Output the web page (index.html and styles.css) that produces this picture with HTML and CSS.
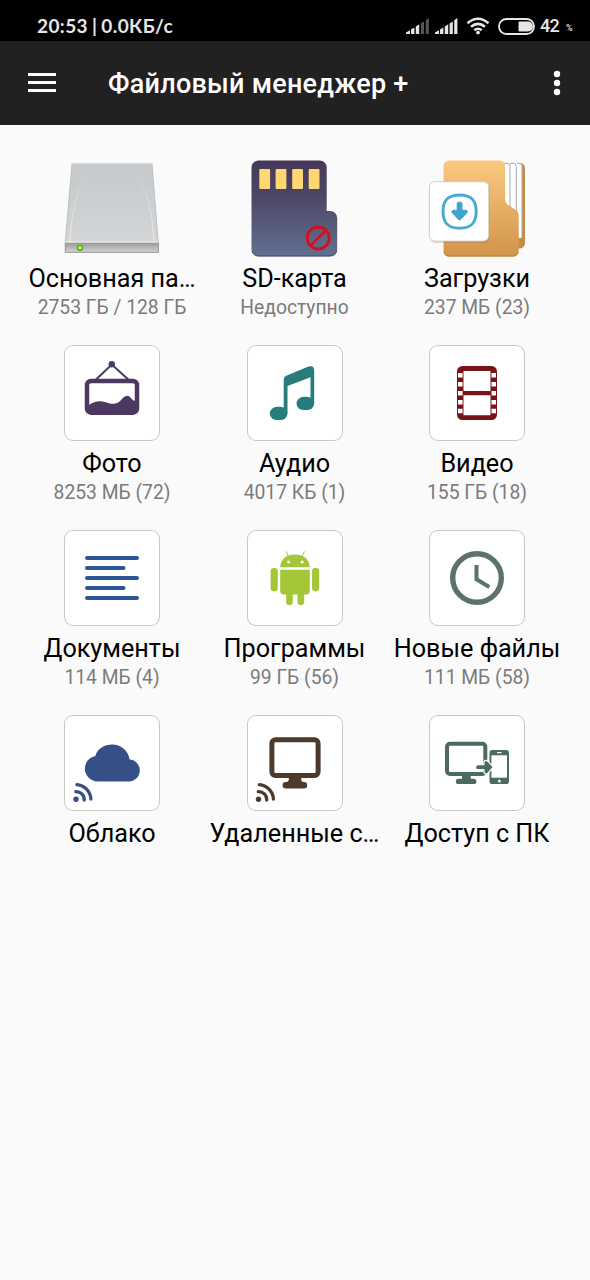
FILE: index.html
```html
<!DOCTYPE html>
<html lang="ru">
<head>
<meta charset="utf-8">
<title>Файловый менеджер +</title>
<link rel="stylesheet" href="styles.css">
</head>
<body>
<svg class="defs" aria-hidden="true">
  <defs>
    <linearGradient id="metal" x1="0" y1="0" x2="0" y2="1"><stop offset="0" stop-color="#c6c9cb"/><stop offset="1" stop-color="#d3d5d7"/></linearGradient>
    <linearGradient id="edge" x1="0" y1="0" x2="0" y2="1"><stop offset="0" stop-color="#999"/><stop offset="1" stop-color="#d4d4d4"/></linearGradient>
    <linearGradient id="shine" x1="0" y1="0" x2="0" y2="1"><stop offset="0" stop-color="#dcdedf" stop-opacity="0"/><stop offset=".5" stop-color="#dcdedf"/><stop offset="1" stop-color="#e6e7e8"/></linearGradient>
    <linearGradient id="card" x1="0" y1="0" x2="0" y2="1"><stop offset="0" stop-color="#47385a"/><stop offset=".35" stop-color="#4c4564"/><stop offset="1" stop-color="#627092"/></linearGradient>
    <linearGradient id="folder" x1="0" y1="0" x2="0" y2="1"><stop offset="0" stop-color="#fbc981"/><stop offset="1" stop-color="#d1944a"/></linearGradient>
    <symbol id="signal" viewBox="0 0 23 16">
      <path d="M0 14.500 4 12.200V16H0zM5 11.500 8.400 9.400V16H5zM9.800 8.500 13.200 6.300V16H9.800z"/>
    </symbol>
    <symbol id="cast" viewBox="0 0 24 24">
      <circle cx="4" cy="20" r="2.7" fill="currentColor"/>
      <path d="M3.8 12.3A8 8 0 0 1 12.2 20.7M4.8 5.4A15.2 15.2 0 0 1 18.9 19.7" fill="none" stroke="currentColor" stroke-width="3.3" stroke-linecap="round"/>
    </symbol>
  </defs>
</svg>

<header class="status">
  <div class="status-left"><span class="clock">20:53</span><span class="bar">|</span><span class="speed">0.0КБ/с</span></div>
  <div class="status-right">
    <svg class="signal" viewBox="0 0 23 16"><use href="#signal"/><path class="weak" d="M15 5.200 18 3.400V16h-3zM19.800 2 22.800 0V16H19.800z"/></svg>
    <svg class="signal signal-two" viewBox="0 0 23 16"><use href="#signal"/><path d="M14.600 5.400 17.800 3.400V16h-3.200zM19.200 2.200 22.400 0V16h-3.200z"/></svg>
    <svg class="wifi" viewBox="0 0 24 18"><path d="M1.500 6.200Q12-2.800 22.500 6.200M5 9.800Q12 4 19 9.800M8.300 13.200Q12 10.200 15.700 13.200" fill="none" stroke="#e6e6e6" stroke-width="2.500"/><circle cx="12" cy="15.600" r="1.900"/></svg>
    <svg class="battery" viewBox="0 0 37 17"><rect x="1" y="1" width="35" height="15" rx="7.500" fill="none" stroke="#e6e6e6" stroke-width="1.800"/><path d="M21.500 3.500h8.500a5 5 0 0 1 0 10H21.500a1 1 0 0 1-1-1V4.500a1 1 0 0 1 1-1z"/></svg>
    <span class="level">42</span><span class="percent">%</span>
  </div>
</header>

<nav class="toolbar">
  <svg class="menu" viewBox="0 0 28 19"><path d="M0 0h28v3H0zM0 8h28v3H0zM0 16h28v3H0z"/></svg>
  <h1 class="title">Файловый менеджер +</h1>
  <svg class="more" viewBox="0 0 8 26"><circle cx="4" cy="4" r="3.200"/><circle cx="4" cy="13" r="3.200"/><circle cx="4" cy="22" r="3.200"/></svg>
</nav>

<main class="grid">
  <section class="item">
    <svg class="icon" viewBox="0 0 96 96">
      <path d="M8 3.500H88L94.300 83H1.200z" fill="url(#metal)" stroke="#b5b7b9" stroke-width=".8"/>
      <path d="M8 3.500H88" stroke="#dcdddd" stroke-width="1.500"/>
      <path d="M22 16Q8 40 6 82M74 16Q88 40 90 82" fill="none" stroke="url(#shine)" stroke-width="1.200"/>
      <rect x="1.200" y="82.700" width="93.200" height="9.600" fill="url(#edge)" stroke="#888" stroke-width=".8"/>
      <path d="M1.200 82.200H94.400" stroke="#ececec" stroke-width="1.200"/>
      <circle cx="16" cy="87.800" r="3.400" fill="#62b51a"/><circle cx="16" cy="87.800" r="1.500" fill="#d8fa8c"/>
    </svg>
    <h2 class="label">Основная па…</h2><p class="info">2753 ГБ / 128 ГБ</p>
  </section>
  <section class="item">
    <svg class="icon" viewBox="0 0 96 96">
      <path d="M11.500 .5H72.700a7 7 0 0 1 7 7V51h3.500a7 7 0 0 1 7 7V89.300a7 7 0 0 1-7 7h-71.700a7 7 0 0 1-7-7V7.500a7 7 0 0 1 7-7z" fill="url(#card)"/>
      <path d="M5 91a7 7 0 0 0 6.500 5h71.700a7 7 0 0 0 6.500-5" fill="none" stroke="#444967" stroke-width="1"/>
      <g fill="#ffd873"><rect x="12.300" y="9" width="10.800" height="20" rx="1"/><rect x="28.600" y="9" width="10.800" height="20" rx="1"/><rect x="45.200" y="9" width="10.800" height="20" rx="1"/><rect x="61.700" y="9" width="10.800" height="20" rx="1"/></g>
      <path d="M63.400 85.800 79 70.200" stroke="#d80d1b" stroke-width="2.600"/><circle cx="71.200" cy="78" r="11" fill="none" stroke="#d80d1b" stroke-width="2.800"/>
    </svg>
    <h2 class="label">SD-карта</h2><p class="info">Недоступно</p>
  </section>
  <section class="item">
    <svg class="icon" viewBox="0 0 96 96">
      <path d="M70 3H91a5 5 0 0 1 5 5V83a5.500 5.500 0 0 1-5.500 5.500H70z" fill="#c78c49"/>
      <path d="M70 3H90a3 3 0 0 1 3 3V78H70z" fill="#fff"/>
      <path d="M74 3.300h4a3 3 0 0 1 3 3V50M81 3.300h3.300a3 3 0 0 1 3 3V55M88 3.300h2a3 3 0 0 1 3 3V78" fill="none" stroke="#a5a6ab" stroke-width="1"/>
      <path d="M20 .4H70.500a5.500 5.500 0 0 1 5.500 5.500V39Q76 42.500 78.500 44.500L87.500 50.500Q89.700 52 89.700 55V91a5.500 5.500 0 0 1-5.500 5.500H20a5.500 5.500 0 0 1-5.500-5.500V5.900A5.500 5.500 0 0 1 20 .4z" fill="url(#folder)"/>
      <path d="M15 92a5 5 0 0 0 5 4H84a5 5 0 0 0 5-4" fill="none" stroke="#bd813c"/>
      <rect x="1" y="23" width="60" height="60" rx="5.500" fill="#855c2a" opacity=".2"/>
      <rect x=".4" y="21.700" width="59.400" height="59.400" rx="5.500" fill="#fff" stroke="#c9c8c8" stroke-width=".9"/>
      <path d="M30.600 35C42.200 35 47.200 40 47.200 51.600S42.200 68.200 30.600 68.200 14 63.200 14 51.600 19 35 30.600 35z" fill="none" stroke="#4aa9cf" stroke-width="3"/>
      <path d="M28.100 43.600Q28.100 42 30.600 42T33.100 43.600V50.200H37.300Q39.300 51 38 52.800L32 59.200Q30.600 60.600 29.200 59.200L23.200 52.800Q22 51 23.900 50.200H28.100z" fill="#3da4ce" stroke="#3da4ce" stroke-width=".8"/>
    </svg>
    <h2 class="label">Загрузки</h2><p class="info">237 МБ (23)</p>
  </section>

  <section class="item">
    <svg class="icon tile" viewBox="0 0 96 96">
      <g fill="none" stroke="#4d3861"><path d="M32 34.500 47.800 19.500 64.300 34.500" stroke-width="2"/><rect x="23" y="36" width="50" height="31.700" rx="4" stroke-width="4.500"/></g>
      <circle cx="47.800" cy="19.300" r="3.200" fill="#4d3861"/>
      <path d="M25 60Q31 56 36 56.300C42 56.500 44 59 50 58.800 57 58.500 58 51 63.300 50.800 67 51 67 55 71 56V67H25z" fill="#4d3861"/>
    </svg>
    <h2 class="label">Фото</h2><p class="info">8253 МБ (72)</p>
  </section>
  <section class="item">
    <svg class="icon tile" viewBox="0 0 96 96">
      <g fill="#267d7b"><path d="M36.700 66V35Q36.700 31.800 39.800 30.500L61.500 21.600Q67.200 20 67.200 25.500V58H63.500V32.300L40.500 41V68z"/><rect x="22.800" y="61.700" width="17.700" height="13.400" rx="7.500" ry="6.600"/><rect x="49.500" y="51.700" width="17.700" height="13.400" rx="7.500" ry="6.600"/></g>
    </svg>
    <h2 class="label">Аудио</h2><p class="info">4017 КБ (1)</p>
  </section>
  <section class="item">
    <svg class="icon tile" viewBox="0 0 96 96">
      <rect x="28" y="21" width="40" height="54" rx="5.500" fill="#7a1319"/>
      <g fill="#fff"><path d="M34.500 26H61.500V46H34.500zM34.500 50.300H61.500V70.300H34.500z"/><path d="M29 28h4.600v4.600H29zM29 37h4.600v4.500H29zM29 46h4.600v4.500H29zM29 55h4.600v4.500H29zM29 63.800h4.600v4.500H29zM62.500 28h4.500v4.600h-4.500zM62.500 37h4.500v4.500h-4.500zM62.500 46h4.500v4.500h-4.500zM62.500 55h4.500v4.500h-4.500zM62.500 63.800h4.500v4.500h-4.500z"/></g>
    </svg>
    <h2 class="label">Видео</h2><p class="info">155 ГБ (18)</p>
  </section>

  <section class="item">
    <svg class="icon tile" viewBox="0 0 96 96">
      <path d="M23 28H73M23 38H59.500M23 48H73M23 58H59.500M23 68H73" stroke="#2b5797" stroke-width="4" stroke-linecap="round"/>
    </svg>
    <h2 class="label">Документы</h2><p class="info">114 МБ (4)</p>
  </section>
  <section class="item">
    <svg class="icon tile" viewBox="0 0 96 96">
      <g fill="#a4c639"><path d="M33.200 37.300C33.500 29 40 24.500 48 24.500S62.500 29 62.800 37.300zM33.200 39.700H62.800V61a3.400 3.400 0 0 1-3.400 3.400H57.200V71.700a3.300 3.300 0 0 1-6.700 0V64.400H45.800V71.700a3.300 3.300 0 0 1-6.700 0V64.400H36.600A3.400 3.400 0 0 1 33.200 61z"/><rect x="23.600" y="38" width="7.200" height="23.400" rx="3.300"/><rect x="65" y="38" width="7.200" height="23.400" rx="3.300"/></g>
      <path d="M39.300 21.800 41.300 26.500M57.300 21.800 55 26.500" stroke="#a4c639" stroke-linecap="round"/><circle cx="41.700" cy="32.100" r="1.500" fill="#fff"/><circle cx="55.200" cy="32.100" r="1.500" fill="#fff"/>
    </svg>
    <h2 class="label">Программы</h2><p class="info">99 ГБ (56)</p>
  </section>
  <section class="item">
    <svg class="icon tile" viewBox="0 0 96 96">
      <g fill="none" stroke="#5c736b"><circle cx="48" cy="48" r="24.300" stroke-width="5.400"/><path d="M47.500 35V49.300L60.300 57" stroke-width="4"/></g>
    </svg>
    <h2 class="label">Новые файлы</h2><p class="info">111 МБ (58)</p>
  </section>

  <section class="item">
    <svg class="icon tile blue" viewBox="0 0 96 96">
      <path d="M33.700 66.400A12.800 12.800 0 0 1 31.400 41C33 34 40 29.500 48.200 29.500 56.500 29.500 64 35 65.600 44.400A11 11 0 0 1 64 66.400z" fill="currentColor"/>
      <use href="#cast" x="8" y="64.300" width="24" height="24"/>
    </svg>
    <h2 class="label">Облако</h2>
  </section>
  <section class="item">
    <svg class="icon tile brown" viewBox="0 0 96 96">
      <rect x="24.900" y="24.800" width="46.200" height="35.700" rx="3.500" fill="none" stroke="currentColor" stroke-width="5"/>
      <path d="M41.800 62H54.200V65Q54.500 67 57 67a3.200 3.200 0 0 1 0 6.400H38.800a3.200 3.200 0 0 1 0-6.400Q41.500 67 41.800 65z" fill="currentColor"/>
      <use href="#cast" x="7.500" y="64.300" width="24" height="24"/>
    </svg>
    <h2 class="label">Удаленные с…</h2>
  </section>
  <section class="item">
    <svg class="icon tile" viewBox="0 0 96 96">
      <rect x="18" y="28.700" width="38.300" height="30.300" rx="3" fill="none" stroke="#4b6b5f" stroke-width="4"/>
      <path d="M33 60H41.700V63.700H44.700a2.700 2.700 0 0 1 0 5.400H29.500a2.700 2.700 0 0 1 0-5.400H33z" fill="#4b6b5f"/>
      <rect x="59.300" y="34" width="21" height="36" fill="#fff"/>
      <rect x="60.500" y="35" width="19.500" height="34" rx="2.800" fill="#4b6b5f"/><path d="M62.400 40.300H78V62.700H62.400z" fill="#fff"/><path d="M68 37.600h4.500" stroke="#fff" stroke-width="1.200"/><circle cx="70.300" cy="66" r="1.500" fill="#fff"/>
      <path d="M49 50.300H55.500V47.200Q56.500 45 58.500 46.700L63 51.500Q63.600 52.100 63 52.800L58.500 57.800Q56.500 59.500 55.500 57V54H49A1.850 1.850 0 0 1 49 50.300z" fill="#4b6b5f" stroke="#fff" stroke-width="2.400" paint-order="stroke"/>
    </svg>
    <h2 class="label">Доступ с ПК</h2>
  </section>
</main>
</body>
</html>
```
FILE: styles.css
```css
* { box-sizing: border-box; }
body {
  margin: 0;
  width: 590px;
  height: 1280px;
  overflow: hidden;
  background: #fafafa;
  font-family: Roboto, sans-serif;
  display: flex;
  flex-direction: column;
}
h1, h2, p { margin: 0; font-weight: 400; white-space: nowrap; }
svg { display: block; flex: none; overflow: visible; }
.defs { width: 0; height: 0; }

.status {
  height: 41px;
  padding: 11px 15px 0 37px;
  background: #000;
  color: #e6e6e6;
  fill: #e6e6e6;
  display: flex;
  justify-content: space-between;
}
.status-left {
  font: 700 19px/30px Lato, "Open Sans", sans-serif;
  letter-spacing: 0.4px;
  display: flex;
  gap: 4px;
}
.status-right { display: flex; height: 30px; align-items: center; }
.signal { width: 23px; height: 16px; }
.weak { fill: #555; }
.signal-two { margin-left: 6px; }
.wifi { width: 24px; height: 18px; margin-left: 8px; }
.battery { width: 37px; height: 17px; margin-left: 8px; }
.level { font: 500 18px/30px Roboto, sans-serif; letter-spacing: -0.8px; margin-left: 5px; width: 26px; }
.percent { font: 500 9px/30px Roboto, sans-serif; padding-top: 4px; width: 9px; }

.toolbar {
  height: 84px;
  background: #212121;
  color: #fff;
  fill: #fff;
  display: flex;
  align-items: center;
  padding: 0 29px 0 28px;
}
.menu { width: 28px; height: 19px; margin-bottom: 2px; }
.title { font-size: 27px; font-weight: 500; line-height: 36px; letter-spacing: 0.25px; margin-left: 52px; flex: 1; padding-top: 2px; }
.more { width: 8px; height: 26px; }

.grid {
  display: grid;
  grid-template-columns: repeat(3, 182.5px);
  grid-auto-rows: 185px;
  justify-content: center;
  padding: 35px 1px 0 0;
}
.item { display: flex; flex-direction: column; align-items: center; }
.icon { width: 96px; height: 96px; }
.tile { background: #fff; border-radius: 9px; box-shadow: inset 0 0 0 1px #c8c8c8; }
.blue { color: #374f87; }
.brown { color: #4d3a2d; }
.label { margin-top: 7px; font-size: 25.2px; line-height: 32px; color: #000; }
.info { font-size: 19.3px; line-height: 26px; color: #7b7b7b; }
```
